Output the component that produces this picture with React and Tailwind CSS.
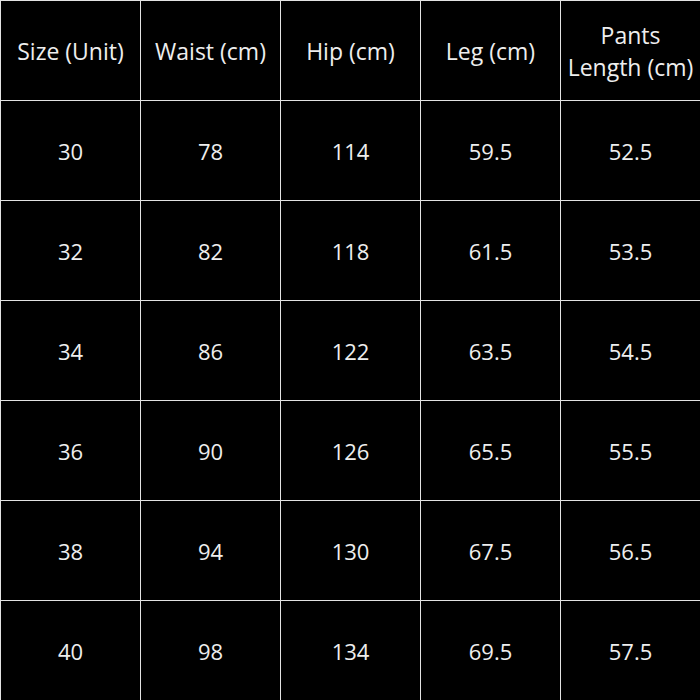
import React from "react";

const headers = ["Size (Unit)", "Waist (cm)", "Hip (cm)", "Leg (cm)", "Pants Length (cm)"];

const rows = [
  ["30", "78", "114", "59.5", "52.5"],
  ["32", "82", "118", "61.5", "53.5"],
  ["34", "86", "122", "63.5", "54.5"],
  ["36", "90", "126", "65.5", "55.5"],
  ["38", "94", "130", "67.5", "56.5"],
  ["40", "98", "134", "69.5", "57.5"],
];

function Cell({ children, header }) {
  return (
    <div
      className={
        "flex h-[100px] items-center justify-center border-l border-t border-[#e2e2e2] px-0.5 text-center text-[#eeeeee] " +
        (header ? "text-[23px] leading-[32px]" : "text-[22px] leading-none")
      }
    >
      {children}
    </div>
  );
}

export default function App() {
  return (
    <div
      className="h-[700px] w-[700px] overflow-hidden bg-black"
      style={{ fontFamily: '"Open Sans", "Noto Sans", sans-serif' }}
    >
      <div className="grid grid-cols-[140px_140px_140px_140px_140px] border-b border-[#e2e2e2]">
        {headers.map((h) => (
          <Cell key={h} header>
            {h}
          </Cell>
        ))}
        {rows.map((r, i) =>
          r.map((v, j) => <Cell key={i + "-" + j}>{v}</Cell>),
        )}
      </div>
    </div>
  );
}
